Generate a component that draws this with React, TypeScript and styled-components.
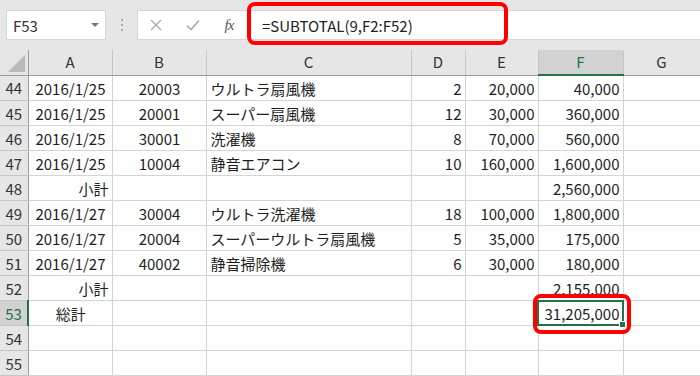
import styled, { createGlobalStyle } from "styled-components";

const Global = createGlobalStyle`
  html, body { margin: 0; padding: 0; background: #e6e6e6; }
  body { font-family: "Noto Sans CJK JP", "Noto Sans", sans-serif; }
`;

const Shell = styled.div`
  width: 700px;
  height: 376px;
  overflow: hidden;
  background: #e6e6e6;
`;

const Toolbar = styled.div`
  height: 50px;
  display: flex;
  align-items: flex-start;
  padding-top: 10px;
  box-sizing: border-box;
`;

const NameBox = styled.div`
  margin-left: 6px;
  width: 100px;
  height: 30px;
  box-sizing: border-box;
  background: #fff;
  border: 1px solid #d6d6d6;
  display: flex;
  align-items: center;
  justify-content: space-between;
  padding: 0 6px 0 6px;
  font-size: 15px;
  color: #333;
`;

const Caret = styled.span`
  width: 0;
  height: 0;
  border-left: 4px solid transparent;
  border-right: 4px solid transparent;
  border-top: 4px solid #777;
`;

const Dots = styled.div`
  width: 31px;
  height: 30px;
  display: flex;
  flex-direction: column;
  align-items: center;
  justify-content: center;
  gap: 3px;
  span {
    width: 2px;
    height: 2px;
    background: #aaa;
  }
`;

const FormulaBar = styled.div`
  position: relative;
  flex: 1;
  height: 30px;
  box-sizing: border-box;
  background: #fff;
  border: 1px solid #d6d6d6;
  border-right: none;
  display: flex;
  align-items: center;
`;

const IconSlot = styled.div<{ $w: number }>`
  width: ${(p) => p.$w}px;
  display: flex;
  justify-content: center;
  align-items: center;
  color: #aaa;
`;

const Fx = styled.span`
  font-family: "Liberation Serif", serif;
  font-style: italic;
  font-size: 15px;
  color: #555;
  letter-spacing: -1px;
`;

const FormulaText = styled.div`
  margin-left: 16px;
  font-size: 15px;
  color: #222;
`;

const Ring = styled.div<{ $t: number; $l: number; $w: number; $h: number }>`
  position: absolute;
  top: ${(p) => p.$t}px;
  left: ${(p) => p.$l}px;
  width: ${(p) => p.$w}px;
  height: ${(p) => p.$h}px;
  box-sizing: border-box;
  border: 4px solid #ff0000;
  border-radius: 8px;
  pointer-events: none;
  z-index: 5;
`;

const Sheet = styled.table`
  border-collapse: collapse;
  table-layout: fixed;
  width: 700px;
  font-size: 15px;
  color: #1e1e1e;
`;

const ColHead = styled.th<{ $sel?: boolean }>`
  height: 24px;
  padding: 0;
  font-weight: normal;
  font-size: 15px;
  line-height: 22px;
  color: ${(p) => (p.$sel ? "#217346" : "#333")};
  background: ${(p) => (p.$sel ? "#d2d2d2" : "#e6e6e6")};
  border-right: 1px solid #c6c6c6;
  border-bottom: ${(p) => (p.$sel ? "2px solid #217346" : "1px solid #9b9b9b")};
`;

const Corner = styled.th`
  padding: 0;
  background: #e6e6e6;
  border-right: 1px solid #9b9b9b;
  border-bottom: 1px solid #9b9b9b;
  position: relative;
  &::after {
    content: "";
    position: absolute;
    right: 3px;
    bottom: 3px;
    border-left: 17px solid transparent;
    border-bottom: 17px solid #b9b9b9;
  }
`;

const RowHead = styled.th<{ $sel?: boolean }>`
  height: 24px;
  padding: 0;
  font-weight: normal;
  font-size: 15px;
  line-height: 23px;
  color: ${(p) => (p.$sel ? "#217346" : "#333")};
  background: ${(p) => (p.$sel ? "#d2d2d2" : "#e6e6e6")};
  border-right: ${(p) => (p.$sel ? "2px solid #217346" : "1px solid #9b9b9b")};
  border-bottom: 1px solid #c6c6c6;
  text-align: center;
`;

const Cell = styled.td<{ $align?: "left" | "right" | "center" }>`
  position: relative;
  height: 24px;
  padding: 0 3px 0 4px;
  background: #fff;
  border-right: 1px solid #d4d4d4;
  border-bottom: 1px solid #d4d4d4;
  text-align: ${(p) => p.$align ?? "left"};
  white-space: nowrap;
  vertical-align: bottom;
  line-height: 23px;
`;

const Selection = styled.div`
  position: absolute;
  inset: -1px -1px -1px -2px;
  border: 2px solid #217346;
  z-index: 3;
  &::after {
    content: "";
    position: absolute;
    right: -4px;
    bottom: -4px;
    width: 5px;
    height: 5px;
    background: #217346;
    border: 1px solid #fff;
  }
`;

const SelValue = styled.span`
  position: relative;
  z-index: 4;
`;

type Row = { n: number; a?: string; aAlign?: "center" | "right"; b?: string; c?: string; d?: string; e?: string; f?: string };

const rows: Row[] = [
  { n: 44, a: "2016/1/25", b: "20003", c: "ウルトラ扇風機", d: "2", e: "20,000", f: "40,000" },
  { n: 45, a: "2016/1/25", b: "20001", c: "スーパー扇風機", d: "12", e: "30,000", f: "360,000" },
  { n: 46, a: "2016/1/25", b: "30001", c: "洗濯機", d: "8", e: "70,000", f: "560,000" },
  { n: 47, a: "2016/1/25", b: "10004", c: "静音エアコン", d: "10", e: "160,000", f: "1,600,000" },
  { n: 48, a: "小計", aAlign: "right", f: "2,560,000" },
  { n: 49, a: "2016/1/27", b: "30004", c: "ウルトラ洗濯機", d: "18", e: "100,000", f: "1,800,000" },
  { n: 50, a: "2016/1/27", b: "20004", c: "スーパーウルトラ扇風機", d: "5", e: "35,000", f: "175,000" },
  { n: 51, a: "2016/1/27", b: "40002", c: "静音掃除機", d: "6", e: "30,000", f: "180,000" },
  { n: 52, a: "小計", aAlign: "right", f: "2,155,000" },
  { n: 53, a: "総計", aAlign: "center", f: "31,205,000" },
  { n: 54 },
  { n: 55 },
];

const cols = ["A", "B", "C", "D", "E", "F", "G"];
const widths = [28, 84, 94, 205, 54, 73, 85, 77];

export default function App() {
  return (
    <Shell>
      <Global />
      <Toolbar>
        <NameBox>
          F53
          <Caret />
        </NameBox>
        <Dots>
          <span />
          <span />
          <span />
        </Dots>
        <FormulaBar>
          <IconSlot $w={36}>
            <svg width="12" height="12" viewBox="0 0 12 12">
              <path d="M1 1 L11 11 M11 1 L1 11" stroke="#aaa" strokeWidth="1.4" />
            </svg>
          </IconSlot>
          <IconSlot $w={38}>
            <svg width="14" height="12" viewBox="0 0 14 12">
              <path d="M1 6.5 L5 10.5 L13 1.5" stroke="#aaa" strokeWidth="1.6" fill="none" />
            </svg>
          </IconSlot>
          <IconSlot $w={34}>
            <Fx>fx</Fx>
          </IconSlot>
          <FormulaText>=SUBTOTAL(9,F2:F52)</FormulaText>
          <Ring $t={-9} $l={109} $w={261} $h={43} />
        </FormulaBar>
      </Toolbar>
      <Sheet>
        <colgroup>
          {widths.map((w, i) => (
            <col key={i} style={{ width: w }} />
          ))}
        </colgroup>
        <thead>
          <tr>
            <Corner />
            {cols.map((c) => (
              <ColHead key={c} $sel={c === "F"}>
                {c}
              </ColHead>
            ))}
          </tr>
        </thead>
        <tbody>
          {rows.map((r) => {
            const sel = r.n === 53;
            return (
              <tr key={r.n}>
                <RowHead $sel={sel}>{r.n}</RowHead>
                <Cell $align={r.aAlign ?? "center"}>{r.a}</Cell>
                <Cell $align="center">{r.b}</Cell>
                <Cell>{r.c}</Cell>
                <Cell $align="right">{r.d}</Cell>
                <Cell $align="right">{r.e}</Cell>
                <Cell $align="right">
                  {sel ? (
                    <>
                      <Selection />
                      <SelValue>{r.f}</SelValue>
                      <Ring $t={-7} $l={-6} $w={98} $h={40} />
                    </>
                  ) : (
                    r.f
                  )}
                </Cell>
                <Cell />
              </tr>
            );
          })}
        </tbody>
      </Sheet>
    </Shell>
  );
}
